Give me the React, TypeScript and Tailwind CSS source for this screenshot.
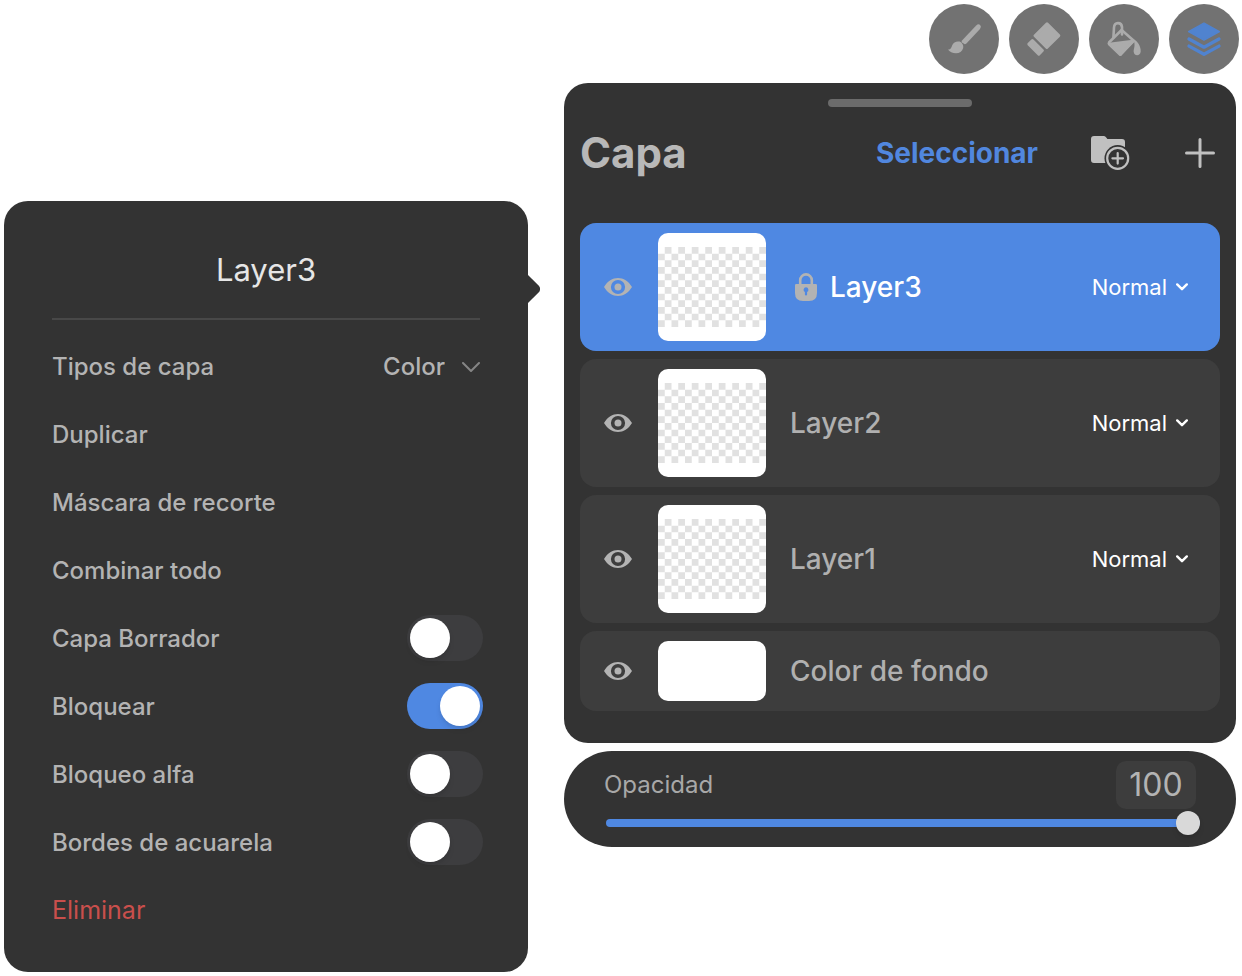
import { useState, type ReactNode } from "react";

const BrushIcon = () => (
  <svg viewBox="0 0 70 70" className="size-full fill-[#ababab]" aria-hidden="true">
    <path d="M33 36.4 47.2 21.5Q49.4 19.4 51.1 21 52.8 22.7 51 24.9L37.4 39.4Q36 40.8 34.6 39.6L33 38.2Q32.1 37.4 33 36.4Z" />
    <path d="M19 45.6C22 45.2 22.4 43.4 23.1 41.4 24.4 38 27.8 36.9 30.6 37.6 33.4 38.6 34.7 41.6 34.2 44 33.3 47.6 30.4 49.3 27 49.3 23.5 49.3 20.5 47.7 19 45.6Z" />
  </svg>
);

const EraserIcon = () => (
  <svg viewBox="0 0 70 70" className="size-full fill-[#ababab] stroke-[#ababab]" strokeWidth="3" strokeLinejoin="round" aria-hidden="true">
    <path d="M38 19.8 49.8 31.6 37.8 43.4 26 31.7Z" />
    <path d="M23.4 36.6 19.8 40.1 29.8 50.1 33.4 46.5Z" />
  </svg>
);

const BucketIcon = () => (
  <svg viewBox="0 0 70 70" className="size-full fill-none stroke-[#ababab]" strokeWidth="2.6" strokeLinecap="round" strokeLinejoin="round" aria-hidden="true">
    <path d="M24.4 33.5 25 23.5C25.4 17.8 32.4 17.8 33 23L33 30.5" />
    <path d="M32.6 26 20.2 38.2Q19.4 39.4 20.2 40.4L31.2 50.7 44.8 36.8Z" />
    <path d="M22 39.8 44 37 31.6 50.6Z" className="fill-[#ababab]" />
    <path d="M44.4 35.6C48.5 36.5 52 43 51.7 47.4 51.3 52.3 45.4 52.5 44.7 48 44.4 44.5 47 42 44.4 35.6Z" className="fill-[#ababab] stroke-none" />
  </svg>
);

const LayersIcon = () => (
  <svg viewBox="0 0 70 70" className="size-full fill-none stroke-[#5083cf]" aria-hidden="true">
    <path d="M35 19 50.4 27.6 35 36.2 19.6 27.6Z" className="fill-[#5083cf]" strokeWidth="1.4" strokeLinejoin="round" />
    <path d="M20 35 35 43.2 50 35M20 42.1 35 50.3 50 42.1" strokeWidth="3.3" strokeLinejoin="round" strokeLinecap="round" />
  </svg>
);

const FolderPlusIcon = () => (
  <svg viewBox="0 0 39 34" className="h-[34px] w-[39px]" aria-hidden="true">
    <path d="M0 3Q0 0 3 0H12.5Q14 0 15 1.3L16.4 3H31Q34 3 34 6V27H3Q0 27 0 24Z" fill="#c0c0c0" />
    <circle cx="26.7" cy="22.3" r="13.2" fill="#333333" />
    <circle cx="26.7" cy="22.3" r="10.5" fill="none" stroke="#c0c0c0" strokeWidth="2.2" />
    <path d="M26.7 17V27.6M21.4 22.3H32" stroke="#c0c0c0" strokeWidth="2.2" strokeLinecap="round" />
  </svg>
);

const PlusIcon = () => (
  <svg viewBox="0 0 30 30" className="size-[30px]" stroke="#c0c0c0" strokeWidth="3" strokeLinecap="round" aria-hidden="true">
    <path d="M15 1.5V28.5M1.5 15H28.5" />
  </svg>
);

const EyeIcon = () => (
  <svg viewBox="0 0 28 18" className="h-[18px] w-7" fill="#b3b3b3" fillRule="evenodd" aria-hidden="true">
    <path d="M0 9C3.6 3 8.6 0 14 0S24.4 3 28 9C24.4 15 19.4 18 14 18S3.6 15 0 9ZM14 1.9A7.1 7.1 0 1 0 14 16.1 7.1 7.1 0 1 0 14 1.9Z" />
    <circle cx="14" cy="9" r="3.5" />
  </svg>
);

const LockIcon = () => (
  <svg viewBox="0 0 22 28" className="h-7 w-[22px]" aria-label="Bloqueada" role="img">
    <path d="M5.2 12V7.2A5.8 5.8 0 0 1 16.8 7.2V12" fill="none" stroke="#b3b3b3" strokeWidth="2.6" />
    <path
      fillRule="evenodd"
      fill="#b3b3b3"
      d="M1.2 11H20.8Q22 11 22 12.2V20Q22 28 14 28H8Q0 28 0 20V12.2Q0 11 1.2 11ZM11 14.3A2.5 2.5 0 0 0 9.9 19V21.5Q9.9 22.4 11 22.4 12.1 22.4 12.1 21.5V19A2.5 2.5 0 0 0 11 14.3Z"
    />
  </svg>
);

const tools: { name: string; icon: ReactNode }[] = [
  { name: "Pincel", icon: <BrushIcon /> },
  { name: "Borrador", icon: <EraserIcon /> },
  { name: "Relleno", icon: <BucketIcon /> },
  { name: "Capas", icon: <LayersIcon /> },
];

const layers = [
  { name: "Layer3", locked: true },
  { name: "Layer2", locked: false },
  { name: "Layer1", locked: false },
];

const actions = ["Duplicar", "Máscara de recorte", "Combinar todo"];

const switches = [
  { id: "draft", label: "Capa Borrador", on: false },
  { id: "lock", label: "Bloquear", on: true },
  { id: "alpha", label: "Bloqueo alfa", on: false },
  { id: "watercolor", label: "Bordes de acuarela", on: false },
];

function Checkerboard() {
  const cells = [];
  for (let row = 0; row < 12; row++) {
    for (let col = (row + 1) % 2; col < 16; col += 2) {
      cells.push(`M${col} ${row}h1v1h-1z`);
    }
  }
  return (
    <svg viewBox="0 0 16 12" preserveAspectRatio="none" className="h-20 w-full" aria-hidden="true">
      <path d={cells.join("")} fill="#e1e1e1" />
    </svg>
  );
}

function LayerMenu() {
  const [state, setState] = useState<Record<string, boolean>>(
    Object.fromEntries(switches.map((s) => [s.id, s.on])),
  );
  return (
    <section className="relative mt-[197px] rounded-3xl bg-[#333333] pb-7 text-2xl font-medium text-[#b3b3b3]">
      <svg viewBox="0 0 12 28" className="absolute top-[74px] -right-3 h-7 w-3 fill-[#333333]" aria-hidden="true">
        <path d="M0 0 10.6 10.4Q13.6 14 10.6 17.6L0 28Z" />
      </svg>
      <div className="mx-12 mb-3 flex h-[119px] items-center justify-center border-b-2 border-[#484848] pt-5">
        <h2 className="text-[31px] leading-10 font-normal text-[#e6e6e6]">Layer3</h2>
      </div>
      <div className="flex h-[68px] items-center justify-between px-12 pt-[2px]">
        <label htmlFor="layer-type">Tipos de capa</label>
        <div className="relative flex items-center">
          <select id="layer-type" className="field-sizing-content appearance-none bg-transparent pr-[35px]">
            <option>Color</option>
          </select>
          <svg viewBox="0 0 18 10" className="pointer-events-none absolute right-0 h-[10px] w-[18px]" fill="none" stroke="#858585" strokeWidth="2" strokeLinecap="round" strokeLinejoin="round" aria-hidden="true">
            <path d="M1 1 9 9 17 1" />
          </svg>
        </div>
      </div>
      {actions.map((a) => (
        <button key={a} type="button" className="flex h-[68px] w-full items-center px-12 pt-[2px] text-left">
          {a}
        </button>
      ))}
      {switches.map((s) => (
        <div key={s.id} className="flex h-[68px] items-center justify-between pr-[45px] pl-12">
          <label htmlFor={s.id} className="pt-[2px]">
            {s.label}
          </label>
          <input
            id={s.id}
            type="checkbox"
            role="switch"
            checked={state[s.id]}
            onChange={(e) => setState({ ...state, [s.id]: e.target.checked })}
            className="flex h-[46px] w-[76px] shrink-0 appearance-none items-center rounded-full bg-[#3d3d3f] px-[3px] before:size-10 before:rounded-full before:bg-white before:shadow-md checked:justify-end checked:bg-[#4f88e2]"
          />
        </div>
      ))}
      <button type="button" className="flex h-[68px] w-full items-center px-12 pt-[2px] text-left text-[25px] font-normal text-[#c94f4c]">
        Eliminar
      </button>
    </section>
  );
}

function LayerPanel() {
  const [selected, setSelected] = useState("Layer3");
  return (
    <section className="mt-[9px] mr-[3px] rounded-3xl bg-[#333333] px-4 pt-4 pb-8">
      <div className="mx-auto h-2 w-36 rounded-full bg-[#6b6b6b]" />
      <header className="mb-6 flex h-[92px] items-center pr-[5px]">
        <h1 className="text-[42px] leading-none font-bold text-[#b8b8b8]">Capa</h1>
        <button type="button" className="ml-auto text-[28px] leading-9 font-bold text-[#5187df]">
          Seleccionar
        </button>
        <button type="button" aria-label="Nueva carpeta" className="ml-[53px]">
          <FolderPlusIcon />
        </button>
        <button type="button" aria-label="Nueva capa" className="ml-[55px]">
          <PlusIcon />
        </button>
      </header>
      <ul className="flex flex-col gap-2 text-[28px] font-medium">
        {layers.map(({ name, locked }) => (
          <li
            key={name}
            onClick={() => setSelected(name)}
            className={`flex h-32 items-center rounded-2xl pr-8 pl-6 ${
              selected === name ? "bg-[#4f88e2] text-white" : "bg-[#3d3d3d] text-[#b0b0b0]"
            }`}
          >
            <button type="button" aria-label={`Visibilidad de ${name}`}>
              <EyeIcon />
            </button>
            <div className="mr-6 ml-[26px] flex size-[108px] shrink-0 items-center overflow-hidden rounded-[10px] bg-white">
              <Checkerboard />
            </div>
            <div className="flex flex-1 items-center">
              {locked && (
                <span className="mr-[13px] ml-[5px]">
                  <LockIcon />
                </span>
              )}
              <span>{name}</span>
            </div>
            <div className="relative flex items-center text-[22px] font-normal text-white">
              <select aria-label={`Modo de ${name}`} className="field-sizing-content appearance-none bg-transparent pr-[21px]">
                <option>Normal</option>
              </select>
              <svg viewBox="0 0 12 8" className="pointer-events-none absolute right-0 h-2 w-3" fill="none" stroke="currentColor" strokeWidth="2.4" strokeLinecap="round" strokeLinejoin="round" aria-hidden="true">
                <path d="M1.2 1.4 6 6.2 10.8 1.4" />
              </svg>
            </div>
          </li>
        ))}
        <li className="flex h-20 items-center rounded-2xl bg-[#3d3d3d] pl-6 text-[#b0b0b0]">
          <button type="button" aria-label="Visibilidad del fondo">
            <EyeIcon />
          </button>
          <div className="mr-6 ml-[26px] h-[60px] w-[108px] shrink-0 rounded-[10px] bg-white" />
          <span>Color de fondo</span>
        </li>
      </ul>
    </section>
  );
}

function OpacityBar() {
  const [value, setValue] = useState(100);
  return (
    <section className="mt-2 mr-[3px] rounded-[48px] bg-[#333333] pt-[10px] pr-9 pb-3 pl-10">
      <div className="flex items-center justify-between pr-1">
        <label htmlFor="opacity" className="text-2xl text-[#a8a8a8]">
          Opacidad
        </label>
        <output htmlFor="opacity" className="flex h-12 w-20 items-center justify-center rounded-[10px] bg-[#3d3d3d] text-[32px] text-[#b3b3b3]">
          {value}
        </output>
      </div>
      <div className="mt-[2px] flex h-6 items-center pl-[2px]">
        <input
          id="opacity"
          type="range"
          min="0"
          max="100"
          value={value}
          onChange={(e) => setValue(Number(e.target.value))}
          style={{
            backgroundImage: `linear-gradient(to right, #4f88e2 ${value}%, #4a4a4a ${value}%)`,
          }}
          className="h-2 w-full appearance-none rounded-full [&::-webkit-slider-thumb]:size-6 [&::-webkit-slider-thumb]:appearance-none [&::-webkit-slider-thumb]:rounded-full [&::-webkit-slider-thumb]:bg-[#d9d9d9] [&::-webkit-slider-thumb]:shadow-md"
        />
      </div>
    </section>
  );
}

export default function App() {
  return (
    <main className="grid min-h-screen grid-cols-[524fr_675fr] items-start gap-9 bg-white pt-1 pr-[3px] pb-1 pl-1 font-[Inter,sans-serif]">
      <LayerMenu />
      <div>
        <nav className="flex justify-end gap-[10px]">
          {tools.map(({ name, icon }) => (
            <button key={name} type="button" aria-label={name} className="size-[70px] rounded-full bg-[#727272]">
              {icon}
            </button>
          ))}
        </nav>
        <LayerPanel />
        <OpacityBar />
      </div>
    </main>
  );
}
